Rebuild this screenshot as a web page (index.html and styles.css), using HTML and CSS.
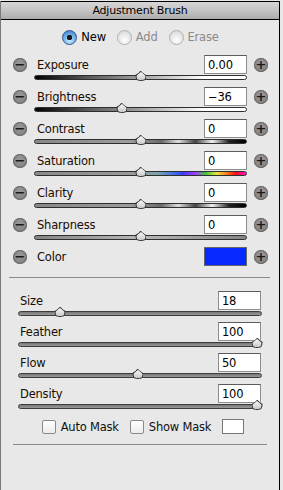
FILE: index.html
```html
<!DOCTYPE html>
<html lang="en">
<head>
    <meta charset="UTF-8" />
    <title>Adjustment Brush</title>
    <link rel="stylesheet" href="styles.css">
</head>
<body>
    <div class="panel">
        <h1 class="header">Adjustment Brush</h1>

        <div class="modes">
            <label class="mode active"><span class="radio on"></span>New</label>
            <label class="mode"><span class="radio"></span>Add</label>
            <label class="mode"><span class="radio"></span>Erase</label>
        </div>

        <div class="adjustments">
            <div class="adj">
                <span class="round-btn">&minus;</span>
                <div class="adj-main">
                    <div class="adj-top"><span class="adj-label">Exposure</span><input class="num" value="0.00" /></div>
                    <div class="track t-exposure"><span class="thumb" style="left: 50%"></span></div>
                </div>
                <span class="round-btn">+</span>
            </div>
            <div class="adj">
                <span class="round-btn">&minus;</span>
                <div class="adj-main">
                    <div class="adj-top"><span class="adj-label">Brightness</span><input class="num" value="&minus;36" /></div>
                    <div class="track t-exposure"><span class="thumb" style="left: 41%"></span></div>
                </div>
                <span class="round-btn">+</span>
            </div>
            <div class="adj">
                <span class="round-btn">&minus;</span>
                <div class="adj-main">
                    <div class="adj-top"><span class="adj-label">Contrast</span><input class="num" value="0" /></div>
                    <div class="track t-contrast"><span class="thumb" style="left: 50%"></span></div>
                </div>
                <span class="round-btn">+</span>
            </div>
            <div class="adj">
                <span class="round-btn">&minus;</span>
                <div class="adj-main">
                    <div class="adj-top"><span class="adj-label">Saturation</span><input class="num" value="0" /></div>
                    <div class="track t-saturation"><span class="thumb" style="left: 50%"></span></div>
                </div>
                <span class="round-btn">+</span>
            </div>
            <div class="adj">
                <span class="round-btn">&minus;</span>
                <div class="adj-main">
                    <div class="adj-top"><span class="adj-label">Clarity</span><input class="num" value="0" /></div>
                    <div class="track t-contrast"><span class="thumb" style="left: 50%"></span></div>
                </div>
                <span class="round-btn">+</span>
            </div>
            <div class="adj">
                <span class="round-btn">&minus;</span>
                <div class="adj-main">
                    <div class="adj-top"><span class="adj-label">Sharpness</span><input class="num" value="0" /></div>
                    <div class="track t-sharpness"><span class="thumb" style="left: 50%"></span></div>
                </div>
                <span class="round-btn">+</span>
            </div>
            <div class="adj adj-color">
                <span class="round-btn">&minus;</span>
                <div class="adj-main">
                    <div class="adj-top"><span class="adj-label">Color</span><span class="swatch"></span></div>
                </div>
                <span class="round-btn">+</span>
            </div>
        </div>

        <hr class="sep" />

        <div class="brush">
            <div class="brow">
                <div class="adj-top"><span class="adj-label">Size</span><input class="num" value="18" /></div>
                <div class="track t-plain"><span class="thumb" style="left: 17%"></span></div>
            </div>
            <div class="brow">
                <div class="adj-top"><span class="adj-label">Feather</span><input class="num" value="100" /></div>
                <div class="track t-plain"><span class="thumb" style="left: 98.5%"></span></div>
            </div>
            <div class="brow">
                <div class="adj-top"><span class="adj-label">Flow</span><input class="num" value="50" /></div>
                <div class="track t-plain"><span class="thumb" style="left: 49%"></span></div>
            </div>
            <div class="brow">
                <div class="adj-top"><span class="adj-label">Density</span><input class="num" value="100" /></div>
                <div class="track t-plain"><span class="thumb" style="left: 98.5%"></span></div>
            </div>
        </div>

        <div class="masks">
            <label class="check"><span class="box"></span>Auto Mask</label>
            <label class="check"><span class="box"></span>Show Mask</label>
            <span class="mask-color"></span>
        </div>

        <hr class="sep sep-bottom" />
    </div>
</body>
</html>
```

FILE: styles.css
```css
* {
    margin: 0;
    padding: 0;
    box-sizing: border-box;
    font-family: 'DejaVu Sans', sans-serif;
}

body {
    background-color: #e8e8e8;
    width: 283px;
    height: 490px;
    overflow: hidden;
}

.panel {
    width: 280px;
    height: 490px;
    border-left: 1px solid #7a7a7a;
    border-right: 1px solid #000;
    background-color: #e8e8e8;
    font-size: 11px;
    letter-spacing: -0.2px;
    color: #111;
}

.header {
    margin-top: 1px;
    height: 19px;
    border-top: 1px solid #000;
    border-bottom: 1px solid #000;
    background: linear-gradient(#d6d6d6, #c4c4c4 50%, #acacac);
    font-size: 11px;
    font-weight: normal;
    text-align: center;
    line-height: 17px;
    color: #000;
}

.modes {
    display: flex;
    justify-content: center;
    align-items: center;
    gap: 11px;
    height: 34px;
    padding-left: 1px;
}

.mode {
    display: flex;
    align-items: center;
    gap: 4px;
    color: #8a8a8a;
    font-size: 11.5px;
}

.mode.active {
    color: #000;
}

.radio {
    width: 15px;
    height: 15px;
    border-radius: 50%;
    border: 1px solid #b0b0b0;
    background: radial-gradient(circle at 50% 70%, #ffffff, #e4e4e4 60%, #cfcfcf);
}

.radio.on {
    border-color: #34558a;
    background: radial-gradient(circle, #1b1b1b 0, #1b1b1b 2.5px, transparent 3px),
        radial-gradient(circle at 50% 75%, #c6ebff, #69aee8 55%, #2f6fc0);
}

.adjustments {
    padding-top: 1px;
}

.adj {
    display: grid;
    grid-template-columns: 14px 1fr 14px;
    column-gap: 7px;
    height: 32px;
    padding: 0 11px 0 12px;
}

.round-btn {
    width: 14px;
    height: 14px;
    margin-top: 3px;
    border-radius: 50%;
    background: radial-gradient(circle at 50% 40%, #9a9a9a, #7a7a7a);
    box-shadow: inset 0 0 0 1px #6a6a6a;
    color: #1a1a1a;
    font-size: 13px;
    font-weight: bold;
    line-height: 13px;
    text-align: center;
    letter-spacing: 0;
}

.adj-top {
    display: flex;
    justify-content: space-between;
    align-items: center;
    height: 19px;
}

.adj-label {
    padding-left: 3px;
    color: #1a0c00;
    font-size: 11.5px;
}

.num {
    width: 43px;
    height: 19px;
    border: 1px solid #8c8c8c;
    border-top-color: #5c5c5c;
    background-color: #fff;
    padding: 0 3px;
    font-size: 11.5px;
    letter-spacing: -0.2px;
    color: #000;
    outline: none;
}

.swatch {
    width: 43px;
    height: 19px;
    border: 1px solid #666;
    background-color: #0529ff;
}

.track {
    position: relative;
    height: 5px;
    margin-top: 1px;
    border: 1px solid #2e2e2e;
    border-radius: 3px;
}

.t-exposure {
    background: linear-gradient(to right, #000, #5a5a5a 25%, #a0a0a0 50%, #fff 80%, #fff);
}

.t-contrast {
    background: linear-gradient(to right, #888 0%, #9c9c9c 45%, #6a6a6a 60%, #dedede 68%, #444 76%, #f2f2f2 84%, #222 92%, #000 100%);
}

.t-saturation {
    background: linear-gradient(to right, #8a8a8a 0%, #9a9a9a 45%, #7aa7a8 58%, #3f6ee8 66%, #3a3cff 70%, #a33cff 76%, #3cc73a 81%, #e8e43a 86%, #ff7a1a 91%, #ff1010 95%, #ff10d0 100%);
}

.t-sharpness {
    background: linear-gradient(to right, #848484, #b8b8b8 50%, #848484);
}

.t-plain {
    border-color: #3c3c3c;
    background: linear-gradient(#777, #9a9a9a);
}

.thumb {
    position: absolute;
    top: -5px;
    width: 11px;
    height: 10px;
    transform: translateX(-50%);
    background: linear-gradient(#fafafa, #c8c8c8);
    border: 1px solid #3a3a3a;
    border-radius: 0 0 4px 4px;
    clip-path: polygon(50% 0, 100% 40%, 100% 100%, 0 100%, 0 40%);
}

.thumb::before {
    content: "";
    position: absolute;
    left: 0;
    top: 0;
    width: 7px;
    height: 1px;
    background: #3a3a3a;
    transform-origin: 0 0;
    transform: translate(-1px, 3.2px) rotate(-40deg);
}

.thumb::after {
    content: "";
    position: absolute;
    right: 0;
    top: 0;
    width: 7px;
    height: 1px;
    background: #3a3a3a;
    transform-origin: 100% 0;
    transform: translate(1px, 3.2px) rotate(40deg);
}

.sep {
    border: none;
    height: 1px;
    background-color: #8a8a8a;
    margin: 0 9px 0 8px;
}

.adjustments + .sep {
    margin-top: -2px;
}

.brush {
    padding: 13px 17px 0 17px;
}

.brow {
    height: 31px;
}

.brow .adj-label {
    padding-left: 2px;
}

.brow .num {
    margin-right: 1px;
}

.masks {
    display: flex;
    align-items: center;
    justify-content: center;
    gap: 11px;
    height: 17px;
    margin-top: 3px;
    padding-left: 6px;
}

.check {
    display: flex;
    align-items: center;
    gap: 5px;
    color: #111;
    font-size: 11.5px;
}

.box {
    width: 14px;
    height: 14px;
    border: 1px solid #8a8a8a;
    border-radius: 2px;
    background: linear-gradient(#fff, #ececec);
}

.mask-color {
    width: 22px;
    height: 15px;
    border: 1px solid #777;
    background-color: #fff;
}

.sep-bottom {
    margin: 9px 12px 0 12px;
}
```
